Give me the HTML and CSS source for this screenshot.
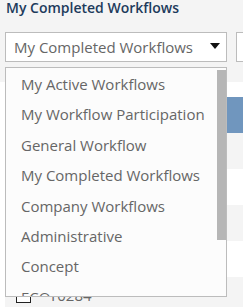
FILE: index.html
```html
<!DOCTYPE html>
<html lang="en">
<head>
    <meta charset="UTF-8">
    <meta name="viewport" content="width=device-width, initial-scale=1.0">
    <title>My Completed Workflows</title>
    <link rel="stylesheet" href="styles.css">
</head>
<body>

<div class="panel">
    <div class="panel-head">
        <div class="panel-title">My Completed Workflows</div>
        <div class="filters">
            <div class="select">
                <span class="select-value">My Completed Workflows</span>
                <span class="caret"></span>
            </div>
            <div class="select select-side"></div>
        </div>
    </div>

    <div class="grid">
        <div class="grid-spacer"></div>
        <div class="grid-row selected"></div>
        <div class="grid-row alt"></div>
        <div class="grid-row"></div>
        <div class="grid-row alt"></div>
        <div class="grid-row"></div>
        <div class="grid-row alt">
            <span class="check"></span>
            <span class="row-text">T0284</span>
        </div>
    </div>

    <div class="dropdown">
        <ul class="dropdown-list">
            <li class="dropdown-item">My Active Workflows</li>
            <li class="dropdown-item">My Workflow Participation</li>
            <li class="dropdown-item">General Workflow</li>
            <li class="dropdown-item">My Completed Workflows</li>
            <li class="dropdown-item">Company Workflows</li>
            <li class="dropdown-item">Administrative</li>
            <li class="dropdown-item">Concept</li>
            <li class="dropdown-item">ECO</li>
        </ul>
        <div class="scroll-thumb"></div>
    </div>
</div>

</body>
</html>
```

FILE: styles.css
```css
:root {
    --bg-grey: #f4f4f4;
    --border: #bcbcbc;
    --title: #1d3b5c;
    --text: #666666;
    --selected: #7096be;
    --thumb: #b6b6b6;
}

* {
    box-sizing: border-box;
    margin: 0;
    padding: 0;
}

body {
    font-family: "Open Sans", "Liberation Sans", Arial, sans-serif;
    background-color: #ffffff;
    color: var(--text);
    overflow: hidden;
}

.panel {
    position: relative;
    width: 243px;
    height: 307px;
    overflow: hidden;
}

.panel-head {
    background-color: var(--bg-grey);
    height: 82px;
    padding: 0 5px;
}

.panel-title {
    color: var(--title);
    font-size: 14px;
    font-weight: 600;
    line-height: 16px;
    padding-left: 1px;
}

.filters {
    display: flex;
    gap: 9px;
    margin-top: 16px;
}

.select {
    flex: 0 0 222px;
    height: 30px;
    border: 1px solid var(--border);
    background-color: #ffffff;
    display: flex;
    align-items: center;
    justify-content: space-between;
    padding: 0 6px 0 8px;
}

.select-side {
    flex: 0 0 40px;
}

.select-value {
    font-size: 15px;
    color: var(--text);
    white-space: nowrap;
}

.caret {
    width: 0;
    height: 0;
    border-left: 5.5px solid transparent;
    border-right: 5.5px solid transparent;
    border-top: 6px solid #111111;
    margin-top: -2px;
}

.grid {
    padding-left: 5px;
}

.grid-spacer {
    height: 15px;
}

.grid-row {
    height: 36px;
    background-color: #ffffff;
    display: flex;
    align-items: center;
    padding-left: 11px;
    gap: 18px;
}

.grid-row.alt {
    background-color: var(--bg-grey);
}

.grid-row.selected {
    background-color: var(--selected);
}

.check {
    width: 15px;
    height: 15px;
    border: 1px solid #222222;
    background-color: #ffffff;
}

.row-text {
    font-size: 15px;
    color: var(--text);
}

.dropdown {
    position: absolute;
    left: 5px;
    top: 67px;
    width: 222px;
    height: 230px;
    background-color: #fcfcfc;
    border: 1px solid var(--border);
    overflow: hidden;
}

.dropdown-list {
    list-style: none;
    padding-top: 1px;
}

.dropdown-item {
    height: 30.4px;
    line-height: 30px;
    padding-left: 15px;
    font-size: 15px;
    color: var(--text);
    white-space: nowrap;
}

.scroll-thumb {
    position: absolute;
    right: 0;
    top: 2px;
    width: 9px;
    height: 170px;
    background-color: var(--thumb);
}
```
